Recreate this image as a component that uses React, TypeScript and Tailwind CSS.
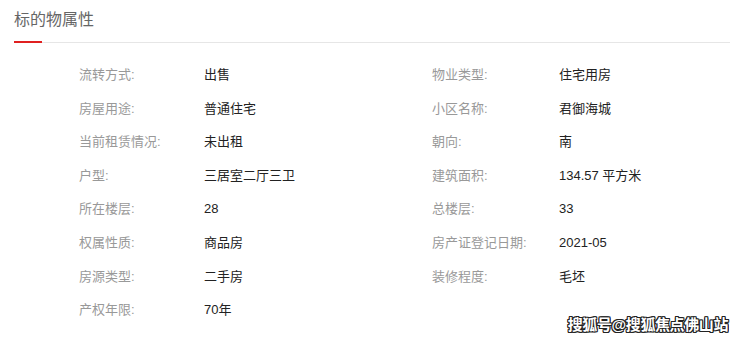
import React from "react";

const rows: [string, string, string?, string?][] = [
  ["流转方式:", "出售", "物业类型:", "住宅用房"],
  ["房屋用途:", "普通住宅", "小区名称:", "君御海城"],
  ["当前租赁情况:", "未出租", "朝向:", "南"],
  ["户型:", "三居室二厅三卫", "建筑面积:", "134.57 平方米"],
  ["所在楼层:", "28", "总楼层:", "33"],
  ["权属性质:", "商品房", "房产证登记日期:", "2021-05"],
  ["房源类型:", "二手房", "装修程度:", "毛坯"],
  ["产权年限:", "70年"],
];

export default function App() {
  return (
    <div
      className="relative w-[740px] h-[341px] bg-white overflow-hidden"
      style={{ fontFamily: '"Liberation Sans", "Noto Sans CJK SC", sans-serif' }}
    >
      <div className="pl-[14px] pr-[10px] pt-[10px]">
        <div className="text-[16px] leading-[20px] text-[#666] h-[31px]">标的物属性</div>
        <div className="relative h-[2px]">
          <div className="absolute left-0 right-0 top-[1px] h-px bg-[#e6e6e6]" />
          <div className="absolute left-0 top-0 w-[28px] h-[2px] bg-[#e02020]" />
        </div>
      </div>
      <div className="pl-[79px] pt-[15px] grid grid-cols-[125px_228px_127px_1fr] text-[13px]">
        {rows.map((r, i) => (
          <React.Fragment key={i}>
            <div className="h-[33.6px] flex items-center text-[#999]">{r[0]}</div>
            <div className="h-[33.6px] flex items-center text-[#222]">{r[1]}</div>
            <div className="h-[33.6px] flex items-center text-[#999]">{r[2] ?? ""}</div>
            <div className="h-[33.6px] flex items-center text-[#222]">{r[3] ?? ""}</div>
          </React.Fragment>
        ))}
      </div>
      <div
        className="absolute right-[12px] bottom-[6px] text-[15px] leading-[20px] font-bold text-white tracking-[-0.4px]"
        style={{
          textShadow:
            "1px 0 0 #222, -1px 0 0 #222, 0 1px 0 #222, 0 -1px 0 #222, 1px 1px 0 #222, -1px -1px 0 #222, 1px -1px 0 #222, -1px 1px 0 #222",
        }}
      >
        搜狐号@搜狐焦点佛山站
      </div>
    </div>
  );
}
